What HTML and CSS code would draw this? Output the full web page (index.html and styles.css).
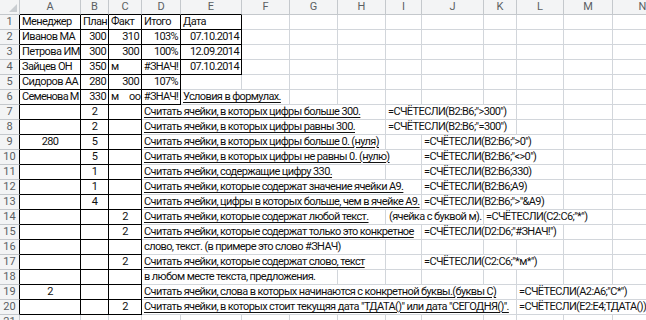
FILE: index.html
```html
<!DOCTYPE html>
<html lang="ru">
<head>
<meta charset="utf-8">
<title>СЧЁТЕСЛИ</title>
<link rel="stylesheet" href="styles.css">
</head>
<body>
<table class="sheet">
<colgroup>
<col class="w-rh"><col class="w-a"><col class="w-b"><col class="w-c"><col class="w-d"><col class="w-e"><col class="w-f"><col class="w-g"><col class="w-h"><col class="w-i"><col class="w-j"><col class="w-k"><col class="w-l"><col class="w-m"><col class="w-n">
</colgroup>
<thead>
<tr class="hdr">
<th class="corner"><div class="corner-box"><span class="tri"></span></div></th>
<th class="bb">A</th><th class="bb">B</th><th class="bb">C</th><th class="bb">D</th><th class="bb">E</th><th>F</th><th>G</th><th>H</th><th>I</th><th>J</th><th>K</th><th>L</th><th>M</th><th>N</th>
</tr>
</thead>
<tbody>
<tr><th class="rh br">1</th><td class="br bb">Менеджер</td><td class="br bb">План</td><td class="br bb">Факт</td><td class="br bb">Итого</td><td class="br bb">Дата</td><td></td><td></td><td></td><td></td><td></td><td></td><td></td><td></td><td></td></tr>
<tr><th class="rh br">2</th><td class="br bb">Иванов МА</td><td class="br bb n">300</td><td class="br bb n">310</td><td class="br bb n">103%</td><td class="br bb n">07.10.2014</td><td></td><td></td><td></td><td></td><td></td><td></td><td></td><td></td><td></td></tr>
<tr><th class="rh br">3</th><td class="br bb">Петрова ИМ</td><td class="br bb n">300</td><td class="br bb n">300</td><td class="br bb n">100%</td><td class="br bb n">12.09.2014</td><td></td><td></td><td></td><td></td><td></td><td></td><td></td><td></td><td></td></tr>
<tr><th class="rh br">4</th><td class="br bb">Зайцев ОН</td><td class="br bb n">350</td><td class="br bb">м</td><td class="br bb c err">#ЗНАЧ!</td><td class="br bb n">07.10.2014</td><td></td><td></td><td></td><td></td><td></td><td></td><td></td><td></td><td></td></tr>
<tr><th class="rh br">5</th><td class="br bb">Сидоров АА</td><td class="br bb n">280</td><td class="br bb n">300</td><td class="br bb n">107%</td><td></td><td></td><td></td><td></td><td></td><td></td><td></td><td></td><td></td><td></td></tr>
<tr><th class="rh br">6</th><td class="br bb tight">Семенова М</td><td class="br bb n">330</td><td class="br bb pre">м     оо</td><td class="br bb c err">#ЗНАЧ!</td><td colspan="2"><span class="u">Условия в формулах.</span></td><td></td><td></td><td></td><td></td><td></td><td></td><td></td><td></td></tr>
<tr><th class="rh br">7</th><td class="br bb"></td><td class="br bb c">2</td><td class="br bb"></td><td colspan="5"><span class="u">Считать ячейки, в которых цифры больше 300.</span></td><td colspan="3">=СЧЁТЕСЛИ(B2:B6;"&gt;300")</td><td></td><td></td><td></td></tr>
<tr><th class="rh br">8</th><td class="br bb"></td><td class="br bb c">2</td><td class="br bb"></td><td colspan="5"><span class="u">Считать ячейки, в которых цифры равны 300.</span></td><td colspan="3">=СЧЁТЕСЛИ(B2:B6;"=300")</td><td></td><td></td><td></td></tr>
<tr><th class="rh br">9</th><td class="br bb c">280</td><td class="br bb c">5</td><td class="br bb"></td><td colspan="5"><span class="u">Считать ячейки, в которых цифры больше 0. (нуля)</span></td><td></td><td colspan="3">=СЧЁТЕСЛИ(B2:B6;"&gt;0")</td><td></td><td></td></tr>
<tr><th class="rh br">10</th><td class="br bb"></td><td class="br bb c">5</td><td class="br bb"></td><td colspan="6"><span class="u">Считать ячейки, в которых цифры не равны 0. (нулю)</span></td><td colspan="3">=СЧЁТЕСЛИ(B2:B6;"&lt;&gt;0")</td><td></td><td></td></tr>
<tr><th class="rh br">11</th><td class="br bb"></td><td class="br bb c">1</td><td class="br bb"></td><td colspan="5"><span class="u">Считать ячейки, содержащие цифру 330.</span></td><td></td><td colspan="3">=СЧЁТЕСЛИ(B2:B6;330)</td><td></td><td></td></tr>
<tr><th class="rh br">12</th><td class="br bb"></td><td class="br bb c">1</td><td class="br bb"></td><td colspan="6"><span class="u">Считать ячейки, которые содержат значение ячейки А9.</span></td><td colspan="3">=СЧЁТЕСЛИ(B2:B6;A9)</td><td></td><td></td></tr>
<tr><th class="rh br">13</th><td class="br bb"></td><td class="br bb c">4</td><td class="br bb"></td><td colspan="6"><span class="u">Считать ячейки, цифры в которых больше, чем в ячейке А9.</span></td><td colspan="3">=СЧЁТЕСЛИ(B2:B6;"&gt;"&amp;A9)</td><td></td><td></td></tr>
<tr><th class="rh br">14</th><td class="br bb"></td><td class="br bb"></td><td class="br bb c">2</td><td colspan="5"><span class="u">Считать ячейки, которые содержат любой текст.</span></td><td colspan="2" class="pl">(ячейка с буквой м).</td><td colspan="3">=СЧЁТЕСЛИ(C2:C6;"*")</td><td></td></tr>
<tr><th class="rh br">15</th><td class="br bb"></td><td class="br bb"></td><td class="br bb c">2</td><td colspan="6"><span class="u">Считать ячейки, которые содержат только это конкретное</span></td><td colspan="3">=СЧЁТЕСЛИ(D2:D6;"#ЗНАЧ!")</td><td></td><td></td></tr>
<tr><th class="rh br">16</th><td class="br bb"></td><td class="br bb"></td><td class="br bb"></td><td colspan="5">слово, текст. (в примере это слово #ЗНАЧ)</td><td></td><td></td><td></td><td></td><td></td><td></td></tr>
<tr><th class="rh br">17</th><td class="br bb"></td><td class="br bb"></td><td class="br bb c">2</td><td colspan="5"><span class="u">Считать ячейки, которые содержат слово, текст</span></td><td></td><td colspan="3">=СЧЁТЕСЛИ(C2:C6;"*м*")</td><td></td><td></td></tr>
<tr><th class="rh br">18</th><td class="br bb"></td><td class="br bb"></td><td class="br bb"></td><td colspan="4">в любом месте текста, предложения.</td><td></td><td></td><td></td><td></td><td></td><td></td><td></td></tr>
<tr><th class="rh br">19</th><td class="br bb c">2</td><td class="br bb"></td><td class="br bb"></td><td colspan="8"><span class="u">Считать ячейки, слова в которых начинаются с конкретной буквы.(буквы С)</span></td><td colspan="3">=СЧЁТЕСЛИ(A2:A6;"С*")</td></tr>
<tr><th class="rh br">20</th><td class="br bb"></td><td class="br bb"></td><td class="br bb c">2</td><td colspan="8"><span class="u">Считать ячейки, в которых стоит текущяя дата "ТДАТА()" или дата "СЕГОДНЯ()".</span></td><td colspan="3">=СЧЁТЕСЛИ(E2:E4;ТДАТА())</td></tr>
<tr><th class="rh">21</th><td></td><td></td><td></td><td></td><td></td><td></td><td></td><td></td><td></td><td></td><td></td><td></td><td></td><td></td></tr>
</tbody>
</table>
</body>
</html>
```
FILE: styles.css
```css
html, body {
  margin: 0;
  padding: 0;
  width: 646px;
  height: 320px;
  overflow: hidden;
  background: #ffffff;
}

.sheet {
  border-collapse: separate;
  border-spacing: 0;
  table-layout: fixed;
  width: 673px;
  font-family: Roboto, "Liberation Sans", sans-serif;
  font-size: 11px;
  letter-spacing: -0.62px;
  color: #111;
}

.w-rh { width: 20px; }
.w-a { width: 61px; }
.w-b { width: 28px; }
.w-c { width: 33px; }
.w-d { width: 39px; }
.w-e { width: 61px; }
.w-f { width: 48px; }
.w-g { width: 48px; }
.w-h { width: 48px; }
.w-i { width: 36px; }
.w-j { width: 62px; }
.w-k { width: 33px; }
.w-l { width: 47px; }
.w-m { width: 49px; }
.w-n { width: 60px; }

.sheet td,
.sheet th {
  box-sizing: border-box;
  height: 15px;
  padding: 0 2px;
  border-right: 1px solid #d2d6db;
  border-bottom: 1px solid #d2d6db;
  white-space: nowrap;
  overflow: hidden;
  line-height: 14px;
  font-weight: normal;
  text-align: left;
  vertical-align: middle;
}

.sheet .hdr th {
  background: #f3f4f5;
  color: #5b5f63;
  text-align: center;
  letter-spacing: 0;
  border-right-color: #c4c8cc;
  border-bottom-color: #c4c8cc;
}

.sheet .rh {
  background: #f3f4f5;
  color: #5b5f63;
  text-align: center;
  letter-spacing: 0;
  padding: 0;
  border-right-color: #c4c8cc;
  border-bottom-color: #c4c8cc;
}

.sheet .hdr .corner {
  padding: 0;
}

.corner-box {
  display: flex;
  justify-content: flex-end;
  align-items: flex-end;
  height: 14px;
  padding: 0 2px 2px 0;
  box-sizing: border-box;
}

.tri {
  width: 0;
  height: 0;
  border-left: 8px solid transparent;
  border-bottom: 8px solid #c9cdd1;
}

.sheet .br { border-right-color: #000; }
.sheet .bb { border-bottom-color: #000; }
.sheet .hdr .bb { border-bottom-color: #000; }
.sheet .rh.br { border-right-color: #000; }

.sheet .n { text-align: right; }
.sheet .c { text-align: center; }
.sheet .err { padding: 0; letter-spacing: -0.7px; }
.sheet .tight { padding-right: 0; letter-spacing: -0.75px; }
.sheet .pre { white-space: pre; }
.sheet .pl { padding-left: 3px; }

.u {
  text-decoration: underline;
  text-decoration-thickness: 1px;
  text-underline-offset: 2px;
}
```
